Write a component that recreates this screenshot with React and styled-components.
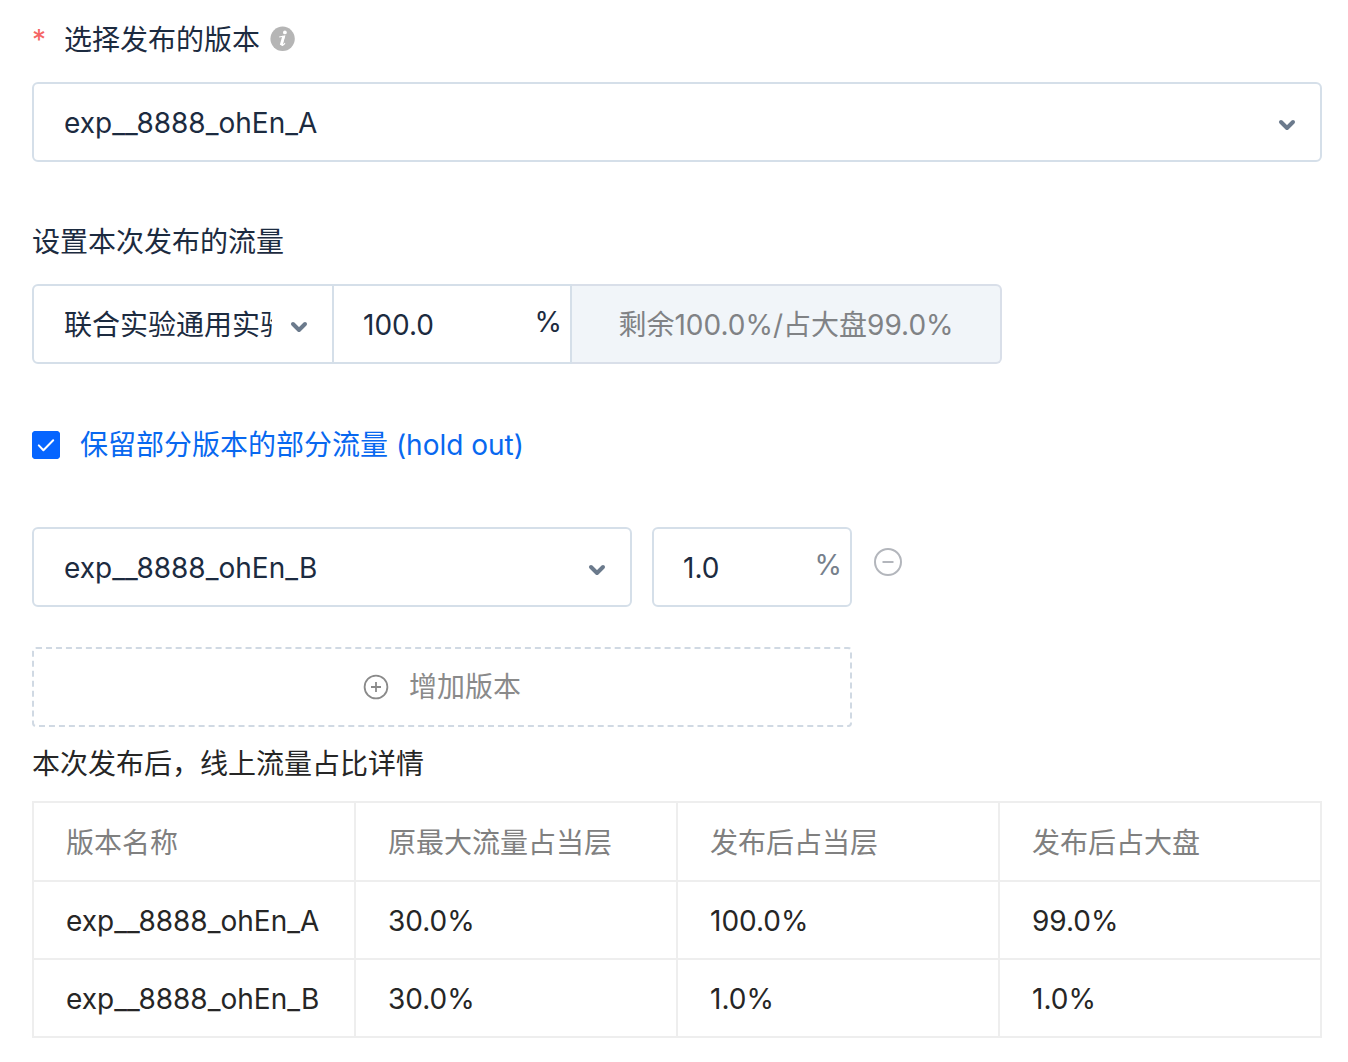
import React, { useState } from 'react';
import styled, { createGlobalStyle } from 'styled-components';

const GlobalStyle = createGlobalStyle`
  *, *::before, *::after { box-sizing: border-box; }
  body {
    margin: 0;
    background: #fff;
    color: #1c2b40;
    font: 395 28px/40px Inter, "Noto Sans CJK SC", sans-serif;
  }
  button, input, select { font: inherit; color: inherit; }
`;

const Page = styled.main`
  padding: 20px 26px 24px 32px;
`;

const Field = styled.section`
  margin-bottom: 60px;
`;

const FieldHead = styled.div`
  display: flex;
  align-items: center;
  height: 40px;
  margin-bottom: 22px;
`;

const Required = styled.span`
  width: 32px;
  color: #f56565;
`;

const InfoButton = styled.button`
  display: flex;
  margin-left: 10px;
  padding: 0 0 2px;
  border: 0;
  background: none;
`;

const SelectBox = styled.div`
  display: grid;
  align-items: center;
  width: ${(p) => p.$width || '100%'};
  height: 80px;
  border: 2px solid #d5dfe9;
  border-radius: ${(p) => (p.$joined ? '6px 0 0 6px' : '6px')};
  background: #fff;

  & > * { grid-area: 1 / 1; }
  & > svg {
    justify-self: end;
    margin: 6px 23px 0 0;
    pointer-events: none;
  }
`;

const NativeSelect = styled.select`
  width: 100%;
  height: 76px;
  padding: 2px 60px 0 30px;
  border: 0;
  border-radius: 6px;
  outline: 0;
  appearance: none;
  background: transparent;
`;

const NumberBox = styled.div`
  display: flex;
  align-items: center;
  width: ${(p) => p.$width};
  height: 80px;
  padding: 0 8px 0 29px;
  border: 2px solid #d5dfe9;
  border-left-width: ${(p) => (p.$joined ? 0 : 2)}px;
  border-radius: ${(p) => (p.$joined ? 0 : 6)}px;
  background: #fff;
`;

const NumberInput = styled.input`
  flex: 1;
  min-width: 0;
  padding: 2px 0 0;
  border: 0;
  outline: 0;
  background: transparent;
`;

const Unit = styled.span`
  padding-bottom: 4px;
  color: ${(p) => (p.$muted ? '#76808c' : 'inherit')};
`;

const Group = styled.div`
  display: flex;
`;

const Addon = styled.div`
  display: flex;
  align-items: center;
  justify-content: center;
  width: 430px;
  height: 80px;
  padding-top: 2px;
  border: 2px solid #d9dfe9;
  border-left: 0;
  border-radius: 0 6px 6px 0;
  background: #f1f5f9;
  color: #808285;
`;

const CheckLabel = styled.label`
  display: flex;
  align-items: center;
  gap: 20px;
  height: 43px;
  padding-bottom: 1px;
  color: #0868f0;
`;

const CheckMark = styled.span`
  display: grid;
  width: 28px;
  height: 28px;
  border-radius: 4px;
  background: ${(p) => (p.$on ? '#0665ff' : '#fff')};
  box-shadow: inset 0 0 0 2px #0665ff;

  & > * { grid-area: 1 / 1; }
  & > svg { pointer-events: none; visibility: ${(p) => (p.$on ? 'visible' : 'hidden')}; }
`;

const Checkbox = styled.input`
  width: 28px;
  height: 28px;
  margin: 0;
  appearance: none;
`;

const VersionRow = styled.div`
  display: flex;
  gap: 20px;
  margin-bottom: 40px;
`;

const RemoveButton = styled.button`
  display: flex;
  align-items: center;
  height: 70px;
  padding: 0 2px;
  border: 0;
  background: none;
  color: #b3b6bc;
`;

const AddButton = styled.button`
  display: flex;
  align-items: center;
  justify-content: center;
  gap: 20px;
  width: 100%;
  max-width: 820px;
  height: 80px;
  padding: 0;
  border: 2px dashed #d0d9e3;
  border-radius: 4px;
  background: #fff;
  color: #8a8a8a;
`;

const TableTitle = styled.h2`
  margin: 17px 0;
  color: #262626;
  font-size: 28px;
  font-weight: 395;
  line-height: 40px;
`;

const Table = styled.table`
  width: 100%;
  border-collapse: collapse;
  table-layout: fixed;
  color: #262626;
`;

const HeadCell = styled.th`
  height: 79px;
  padding: 2px 32px 0;
  border: 2px solid #eeeeee;
  color: #808080;
  font-weight: 395;
  text-align: left;
`;

const Cell = styled.td`
  height: 78px;
  padding: 2px 32px 0;
  border: 2px solid #eeeeee;
`;

const Chevron = () => (
  <svg width="20" height="14" viewBox="0 0 20 14" fill="none" stroke="#6b7a8c" strokeWidth="4" strokeLinecap="round" strokeLinejoin="round" aria-hidden="true">
    <path d="M4 4l6 6 6-6" />
  </svg>
);

const InfoIcon = () => (
  <svg width="26" height="26" viewBox="0 0 26 26" aria-hidden="true">
    <circle cx="12.6" cy="12.8" r="12.2" fill="#b5b5b5" />
    <circle cx="14.9" cy="6.4" r="1.9" fill="#fff" />
    <path d="M9.2 11l5.4-1-2.6 9q-.1 1.2 3-1.8" fill="none" stroke="#fff" strokeWidth="1.2" />
    <path d="M13.6 10.2l-2.5 8.9" stroke="#fff" strokeWidth="2.6" />
  </svg>
);

const MinusIcon = () => (
  <svg width="28" height="28" viewBox="0 0 28 28" fill="none" stroke="currentColor" strokeWidth="2" aria-hidden="true">
    <circle cx="14" cy="14" r="13" />
    <path d="M8.5 14h11" />
  </svg>
);

const PlusIcon = () => (
  <svg width="26" height="26" viewBox="0 0 26 26" fill="none" stroke="currentColor" strokeWidth="1.8" aria-hidden="true">
    <circle cx="13" cy="13" r="11.4" />
    <path d="M8 13h10M13 8v10" />
  </svg>
);

const CheckIcon = () => (
  <svg width="28" height="28" viewBox="0 0 28 28" fill="none" stroke="#fff" strokeWidth="2" strokeLinecap="round" strokeLinejoin="round" aria-hidden="true">
    <path d="M6.8 14.4l4.6 4.8 9.8-10" />
  </svg>
);

function Select({ id, label, value, options, width, joined }) {
  return (
    <SelectBox $width={width} $joined={joined}>
      <NativeSelect id={id} aria-label={label} defaultValue={value}>
        {options.map((option) => (
          <option key={option}>{option}</option>
        ))}
      </NativeSelect>
      <Chevron />
    </SelectBox>
  );
}

function Percent({ label, value, width, joined, muted }) {
  return (
    <NumberBox $width={width} $joined={joined}>
      <NumberInput type="text" inputMode="decimal" aria-label={label} defaultValue={value} />
      <Unit $muted={muted}>%</Unit>
    </NumberBox>
  );
}

const versions = ['exp__8888_ohEn_A', 'exp__8888_ohEn_B'];
const columns = ['版本名称', '原最大流量占当层', '发布后占当层', '发布后占大盘'];
const rows = [
  ['exp__8888_ohEn_A', '30.0%', '100.0%', '99.0%'],
  ['exp__8888_ohEn_B', '30.0%', '1.0%', '1.0%'],
];

export default function App() {
  const [holdOut, setHoldOut] = useState(true);
  return (
    <Page>
      <GlobalStyle />
      <Field>
        <FieldHead>
          <Required>*</Required>
          <label htmlFor="release">选择发布的版本</label>
          <InfoButton type="button" aria-label="说明">
            <InfoIcon />
          </InfoButton>
        </FieldHead>
        <Select id="release" value={versions[0]} options={versions} />
      </Field>

      <Field>
        <FieldHead>
          <label htmlFor="layer">设置本次发布的流量</label>
        </FieldHead>
        <Group>
          <Select id="layer" value="联合实验通用实验层" options={['联合实验通用实验层']} width="302px" joined />
          <Percent label="发布流量" value="100.0" width="238px" joined />
          <Addon>剩余100.0%/占大盘99.0%</Addon>
        </Group>
      </Field>

      <Field>
        <CheckLabel>
          <CheckMark $on={holdOut}>
            <Checkbox type="checkbox" checked={holdOut} onChange={(e) => setHoldOut(e.target.checked)} />
            <CheckIcon />
          </CheckMark>
          保留部分版本的部分流量 (hold out)
        </CheckLabel>
      </Field>

      <VersionRow>
        <Select label="保留版本" value={versions[1]} options={versions} width="600px" />
        <Percent label="保留流量" value="1.0" width="200px" muted />
        <RemoveButton type="button" aria-label="移除版本">
          <MinusIcon />
        </RemoveButton>
      </VersionRow>

      <AddButton type="button">
        <PlusIcon />
        增加版本
      </AddButton>

      <TableTitle>本次发布后，线上流量占比详情</TableTitle>
      <Table>
        <thead>
          <tr>
            {columns.map((name) => (
              <HeadCell key={name} scope="col">{name}</HeadCell>
            ))}
          </tr>
        </thead>
        <tbody>
          {rows.map((row) => (
            <tr key={row[0]}>
              {row.map((value, i) => (
                <Cell key={columns[i]}>{value}</Cell>
              ))}
            </tr>
          ))}
        </tbody>
      </Table>
    </Page>
  );
}
